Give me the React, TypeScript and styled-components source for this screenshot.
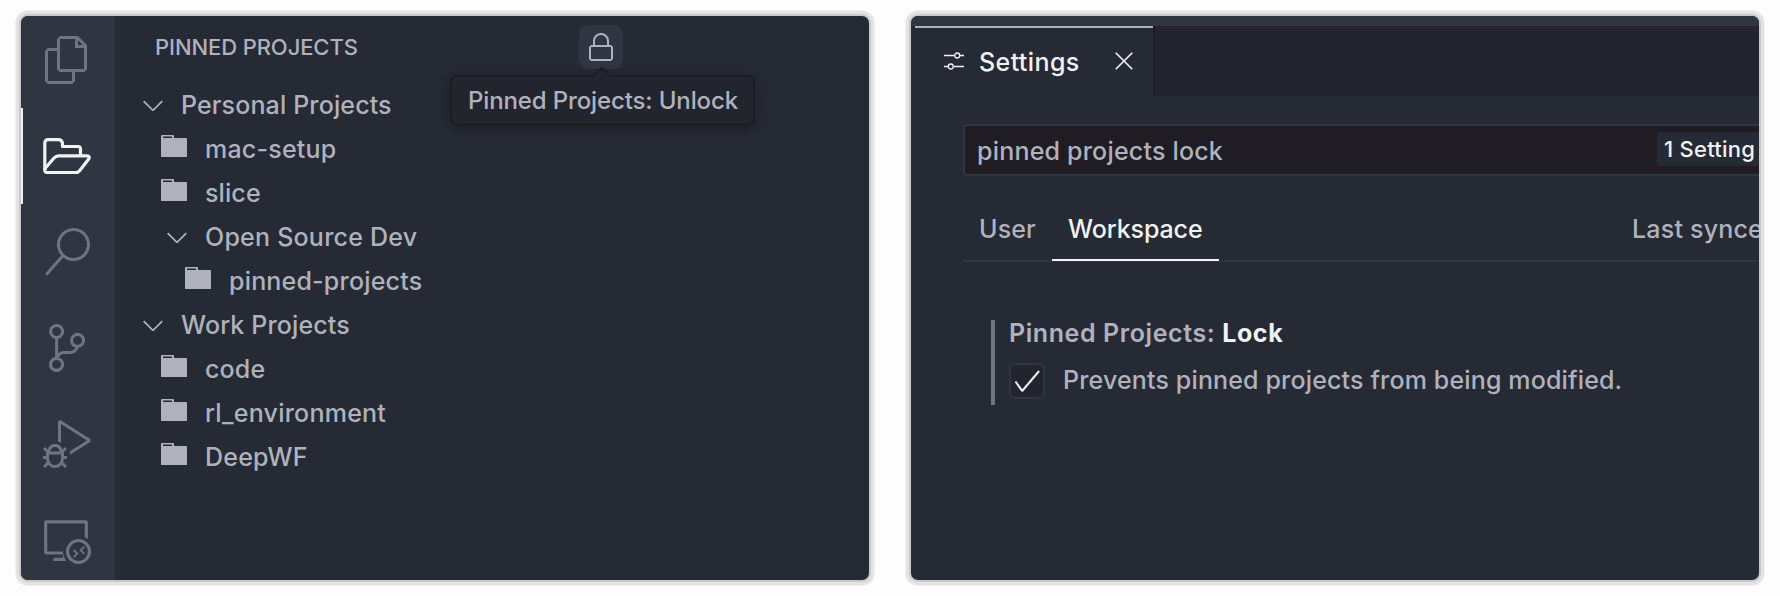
import React from "react";
import styled, { createGlobalStyle, css } from "styled-components";
import {
  VscCheck,
  VscChevronDown,
  VscDebugAlt,
  VscFiles,
  VscLock,
  VscRemoteExplorer,
  VscSearch,
  VscSourceControl,
} from "react-icons/vsc";

const c = {
  page: "#fdfdfd",
  bg: "#262a34",
  bar: "#2f3541",
  dark: "#22252d",
  edge: "#1b1d21",
  input: "#1f1d23",
  text: "#afb2bd",
  muted: "#6f7580",
  bright: "#f1f2f4",
};

const GlobalStyle = createGlobalStyle`
  *, *::before, *::after { box-sizing: border-box; }
  body {
    margin: 0;
    background: ${c.page};
    color: ${c.text};
    font-family: Inter, "Liberation Sans", sans-serif;
    font-size: 25px;
    font-weight: 450;
    line-height: 1;
    overflow: hidden;
  }
`;

const Page = styled.main`
  display: flex;
  gap: 42px;
  height: 596px;
  padding: 16px 21px;
`;

const Panel = styled.section`
  display: flex;
  width: 848px;
  height: 564px;
  flex: none;
  overflow: hidden;
  border-radius: 7px;
  background: ${c.bg};
  box-shadow: 0 0 0 2px #c9c9c9, 0 0 0 5px #e3e3e3, 0 0 0 6px #f0f0f0;
`;

const Label = styled.span<{ $track?: number }>`
  white-space: nowrap;
  letter-spacing: ${(p) => p.$track ?? 0}px;
`;

const ActivityBar = styled.nav`
  width: 94px;
  flex: none;
  margin-top: -4px;
  background: ${c.bar};
`;

const Activity = styled.div<{ $active?: boolean }>`
  display: flex;
  align-items: center;
  height: 96px;
  padding-left: 20px;
  border-left: 2px solid ${(p) => (p.$active ? c.bright : "transparent")};
  color: ${(p) => (p.$active ? c.bright : c.muted)};
  svg { width: 48px; height: 48px; }
`;

const Sidebar = styled.div`
  flex: 1;
`;

const SidebarHeader = styled.header`
  display: flex;
  align-items: center;
  justify-content: space-between;
  height: 67px;
  padding: 0 246px 5px 40px;
  font-size: 22px;
`;

const LockButton = styled.div`
  position: relative;
  display: flex;
  align-items: center;
  justify-content: center;
  width: 44px;
  height: 44px;
  border-radius: 9px;
  background: ${c.bar};
  svg { width: 32px; height: 32px; }
`;

const Tooltip = styled.div`
  position: absolute;
  top: 50px;
  left: -129px;
  display: flex;
  align-items: center;
  width: 305px;
  height: 50px;
  padding: 2px 0 0 16px;
  border: 2px solid ${c.edge};
  border-radius: 7px;
  background: ${c.dark};
  box-shadow: 0 3px 12px rgba(20, 21, 24, 0.6);
  font-size: 24px;
`;

const Arrow = styled.svg`
  && {
    position: absolute;
    top: -10px;
    left: 141px;
    width: 18px;
    height: 11px;
  }
`;

const Tree = styled.div``;

const Row = styled.div<{ $depth: number }>`
  display: flex;
  align-items: center;
  height: 44px;
  padding-left: ${(p) => p.$depth}px;
`;

const Chevron = styled(VscChevronDown)`
  width: 32px;
  height: 32px;
  margin-right: 12px;
`;

const FolderSvg = styled.svg`
  width: 26px;
  height: 22px;
  margin: 0 18px 6px 0;
`;

const Editor = styled.div`
  flex: 1;
  min-width: 0;
`;

const TitleStrip = styled.div`
  height: 10px;
  background: ${c.bar};
`;

const TabBar = styled.div`
  display: flex;
  height: 70px;
  background: ${c.dark};
`;

const TabGutter = styled.div`
  width: 4px;
  background: ${c.bg};
`;

const EditorTab = styled.div`
  display: flex;
  align-items: center;
  width: 240px;
  padding-left: 29px;
  background: linear-gradient(${c.text} 0 2px, ${c.bg} 2px);
  border-right: 2px solid ${c.edge};
  color: ${c.bright};
  svg { flex: none; }
  span { width: 121px; margin: 2px 15px 0 15px; }
`;

const SettingsBody = styled.div`
  padding: 28px 0 0 52px;
`;

const SearchBox = styled.div`
  display: flex;
  align-items: center;
  justify-content: space-between;
  width: 820px;
  height: 52px;
  padding: 2px 0 0 12px;
  border: 2px solid ${c.bar};
  border-radius: 4px;
  background: ${c.input};
`;

const Badge = styled.div`
  display: flex;
  align-items: center;
  width: 124px;
  height: 34px;
  margin-bottom: 4px;
  padding-left: 7px;
  border-radius: 4px;
  background: ${c.bg};
  color: ${c.bright};
  font-size: 22px;
`;

const Scopes = styled.div`
  display: flex;
  align-items: center;
  height: 62px;
  width: 900px;
  margin-top: 24px;
  border-bottom: 2px solid ${c.bar};
`;

const Scope = styled.div<{ $active?: boolean; $width: number }>`
  display: flex;
  align-items: center;
  width: ${(p) => p.$width}px;
  height: 62px;
  padding: 0 0 1px 16px;
  color: ${(p) => (p.$active ? c.bright : c.text)};
  ${(p) => p.$active && css`border-bottom: 2px solid ${c.bright}; padding-bottom: 0;`}
`;

const SyncStatus = styled.div`
  margin-left: 413px;
  padding-bottom: 1px;
  white-space: nowrap;
`;

const Setting = styled.article`
  height: 85px;
  margin: 58px 0 0 28px;
  padding: 1px 0 0 14px;
  border-left: 4px solid ${c.muted};
`;

const SettingTitle = styled.h2`
  margin: 0;
  font-size: 25px;
  font-weight: 600;
  line-height: 25px;
  strong { color: ${c.bright}; font-weight: 700; }
`;

const SettingRow = styled.div`
  display: flex;
  align-items: center;
  margin-top: 17px;
  > span { margin-bottom: 2px; }
`;

const Checkbox = styled.div`
  display: flex;
  align-items: center;
  justify-content: center;
  width: 36px;
  height: 36px;
  margin-right: 18px;
  border: 2px solid ${c.bar};
  border-radius: 6px;
  background: ${c.dark};
  color: ${c.bright};
  svg { width: 32px; height: 32px; flex: none; }
`;

const Folder = () => (
  <FolderSvg viewBox="0 0 26 22" fill="currentColor">
    <path fillRule="evenodd" d="M0 1Q0 0 1 0H12Q13 0 13 1V3H25Q26 3 26 4V22H0ZM2 1.5V3H11V1.5Z" />
  </FolderSvg>
);

const OpenFolder = () => (
  <svg viewBox="0 0 48 48" fill="none" stroke="currentColor" strokeWidth="3.2" strokeLinejoin="round">
    <path d="M37.5 23V17Q37.5 14.5 35 14.5H19.5V11Q18.5 7.7 15.5 7.7H5Q1.8 7.7 1.8 11V38" />
    <path d="M2 36.5L11 26Q13 23.8 15.5 23.8H44Q47.3 24 45.7 27L37 38.3Q35 40.5 33 40.5H4Q1.8 40.5 1.8 38Z" />
  </svg>
);

const Sliders = () => (
  <svg width="20" height="20" viewBox="0 0 20 20" fill="none" stroke="currentColor" strokeWidth="1.3">
    <path d="M0 4.5H10.5M16 4.5H20M0 15.5H4M9.5 15.5H20" />
    <circle cx="13.2" cy="4.5" r="2.5" />
    <circle cx="6.8" cy="15.5" r="2.5" />
  </svg>
);

const Close = () => (
  <svg width="18" height="18" viewBox="0 0 18 18" fill="none" stroke="currentColor" strokeWidth="1.6">
    <path d="M0.7 0.7L17.3 17.3M17.3 0.7L0.7 17.3" />
  </svg>
);

type Node = { name: string; depth: number; folder?: boolean; track?: number };

const nodes: Node[] = [
  { name: "Personal Projects", depth: 22, track: 0.13 },
  { name: "mac-setup", depth: 46, folder: true, track: 0.22 },
  { name: "slice", depth: 46, folder: true, track: 0.1 },
  { name: "Open Source Dev", depth: 46, track: 0.23 },
  { name: "pinned-projects", depth: 70, folder: true, track: 0.19 },
  { name: "Work Projects", depth: 22, track: 0.13 },
  { name: "code", depth: 46, folder: true, track: 0.15 },
  { name: "rl_environment", depth: 46, folder: true, track: 0.23 },
  { name: "DeepWF", depth: 46, folder: true, track: 0.2 },
];

const activities = [
  VscFiles,
  OpenFolder,
  VscSearch,
  VscSourceControl,
  VscDebugAlt,
  VscRemoteExplorer,
];

export default function App() {
  return (
    <>
      <GlobalStyle />
      <Page>
        <Panel>
          <ActivityBar>
            {activities.map((Icon, i) => (
              <Activity key={i} $active={i === 1}>
                <Icon />
              </Activity>
            ))}
          </ActivityBar>
          <Sidebar>
            <SidebarHeader>
              <Label $track={-0.1}>PINNED PROJECTS</Label>
              <LockButton>
                <VscLock />
                <Tooltip>
                  <Arrow viewBox="0 0 18 11">
                    <path d="M0 10L9 1L18 10V11H0Z" fill={c.dark} />
                    <path d="M0 9L9 1L18 9" fill="none" stroke={c.edge} strokeWidth="2" />
                  </Arrow>
                  <Label $track={-0.13}>Pinned Projects: Unlock</Label>
                </Tooltip>
              </LockButton>
            </SidebarHeader>
            <Tree>
              {nodes.map((n) => (
                <Row key={n.name} $depth={n.depth}>
                  {n.folder ? <Folder /> : <Chevron />}
                  <Label $track={n.track}>{n.name}</Label>
                </Row>
              ))}
            </Tree>
          </Sidebar>
        </Panel>
        <Panel>
          <Editor>
            <TitleStrip />
            <TabBar>
              <TabGutter />
              <EditorTab>
                <Sliders />
                <Label $track={0.4}>Settings</Label>
                <Close />
              </EditorTab>
            </TabBar>
            <SettingsBody>
              <SearchBox>
                <Label $track={0.2}>pinned projects lock</Label>
                <Badge>
                  <Label $track={0.25}>1 Setting</Label>
                </Badge>
              </SearchBox>
              <Scopes>
                <Scope $width={89}>
                  <Label $track={0.15}>User</Label>
                </Scope>
                <Scope $width={167} $active>
                  <Label $track={-0.1}>Workspace</Label>
                </Scope>
                <SyncStatus>
                  <Label $track={0.2}>Last synce</Label>
                </SyncStatus>
              </Scopes>
              <Setting>
                <SettingTitle>
                  <Label $track={0.59}>
                    Pinned Projects: <strong>Lock</strong>
                  </Label>
                </SettingTitle>
                <SettingRow>
                  <Checkbox>
                    <VscCheck />
                  </Checkbox>
                  <Label $track={0.15}>Prevents pinned projects from being modified.</Label>
                </SettingRow>
              </Setting>
            </SettingsBody>
          </Editor>
        </Panel>
      </Page>
    </>
  );
}
